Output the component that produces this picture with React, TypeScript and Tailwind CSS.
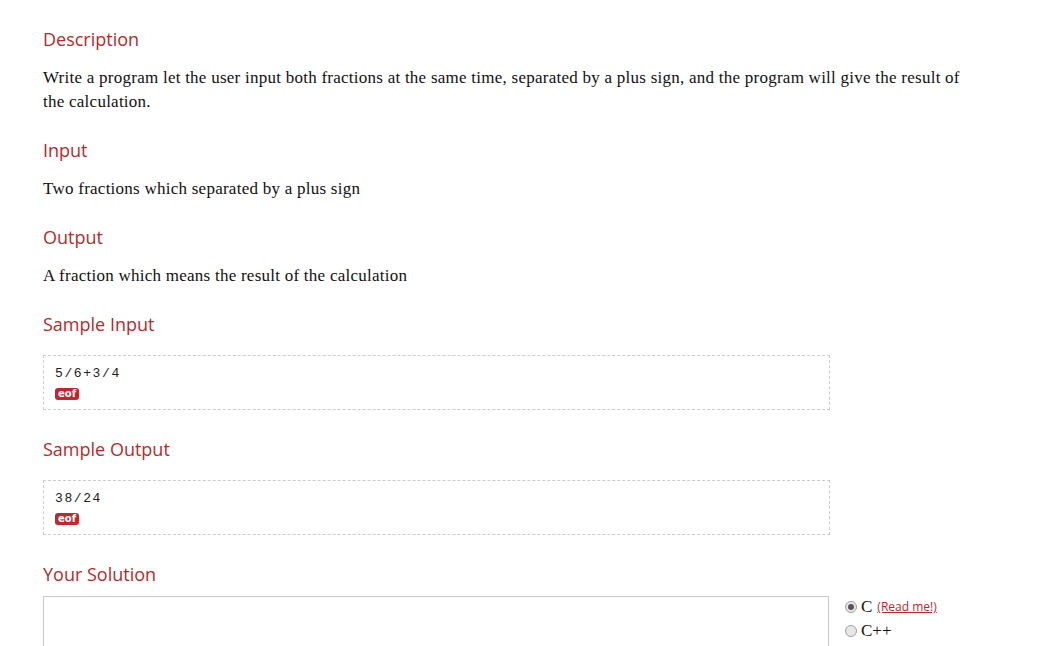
export default function App() {
  const h = "text-[18px] leading-[24px] text-[#b52b2b] font-['Open_Sans',sans-serif]";
  const p = "text-[17px] leading-[24px] tracking-[0.25px] text-[#111] font-['Liberation_Serif',serif]";
  const box = "border border-dashed border-[#cccccc] px-[11px] pt-[8px] pb-[9px] w-[787px]";
  const eof = "inline-block bg-[#c1272d] text-white text-[10px] leading-[12px] font-bold px-[3px] rounded-[3px] font-['DejaVu_Sans',sans-serif]";
  const mono = "text-[13px] leading-[20px] tracking-[1.6px] text-[#222] font-['Liberation_Mono',monospace]";
  return (
    <div className="w-[1056px] h-[646px] overflow-hidden bg-white pl-[43px] pt-[27px]">
      <h2 className={h}>Description</h2>
      <p className={`${p} mt-[15px] w-[930px]`}>
        Write a program let the user input both fractions at the same time, separated by a plus sign, and the program will give the result of the calculation.
      </p>
      <h2 className={`${h} mt-[24px]`}>Input</h2>
      <p className={`${p} mt-[15px]`}>Two fractions which separated by a plus sign</p>
      <h2 className={`${h} mt-[24px]`}>Output</h2>
      <p className={`${p} mt-[15px]`}>A fraction which means the result of the calculation</p>
      <h2 className={`${h} mt-[24px]`}>Sample Input</h2>
      <div className={`${box} mt-[19px]`}>
        <div className={mono}>5/6+3/4</div>
        <div className="flex mt-[4px]"><span className={eof}>eof</span></div>
      </div>
      <h2 className={`${h} mt-[27px]`}>Sample Output</h2>
      <div className={`${box} mt-[19px]`}>
        <div className={mono}>38/24</div>
        <div className="flex mt-[4px]"><span className={eof}>eof</span></div>
      </div>
      <h2 className={`${h} mt-[27px]`}>Your Solution</h2>
      <div className="flex mt-[10px] gap-[16px]">
        <div className="w-[786px] h-[200px] border border-[#c8c8c8] border-b-0"></div>
        <div className="pt-[1px] flex flex-col gap-[4px]">
          <label className="flex items-center gap-[4px] text-[15px] leading-[20px] text-[#111] font-['Liberation_Serif',serif]">
            <span className="w-[12px] h-[12px] rounded-full border border-[#a0a0a0] bg-[#e8e8e8] flex items-center justify-center">
              <span className="w-[6px] h-[6px] rounded-full bg-[#555]"></span>
            </span>
            <span className="text-[17px]">C</span>
            <a className="text-[12px] text-[#b52b2b] underline font-['Open_Sans',sans-serif] ml-[1px]">(Read me!)</a>
          </label>
          <label className="flex items-center gap-[4px] text-[17px] leading-[20px] text-[#111] font-['Liberation_Serif',serif]">
            <span className="w-[12px] h-[12px] rounded-full border border-[#a0a0a0] bg-[#e8e8e8]"></span>
            <span>C++</span>
          </label>
        </div>
      </div>
    </div>
  );
}
